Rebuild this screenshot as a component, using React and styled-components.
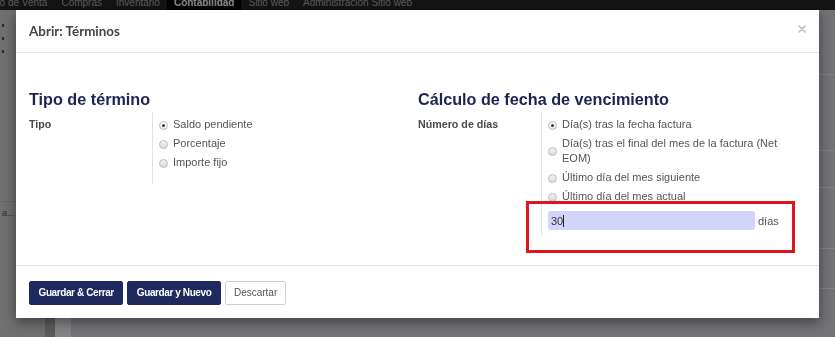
import React from 'react';
import styled, { createGlobalStyle } from 'styled-components';

const GlobalStyle = createGlobalStyle`
  html, body { margin: 0; padding: 0; width: 835px; height: 337px; overflow: hidden; background: #737377; }
  body { font-family: "Liberation Sans", Arial, sans-serif; }
  * { box-sizing: border-box; }
`;

const Page = styled.div`
  width: 835px;
  height: 337px;
  display: flex;
  flex-direction: column;
  background: #737377;
`;

const NavBar = styled.nav`
  height: 10px;
  flex: none;
  background: #141414;
  overflow: hidden;
`;

const NavList = styled.div`
  display: flex;
  margin-left: -28px;
`;

const NavItem = styled.div`
  padding: 0 7px;
  height: 10px;
  line-height: 6px;
  font-size: 10px;
  white-space: nowrap;
  color: ${p => (p.$active ? '#8c8c8c' : '#5c5c5c')};
  background: ${p => (p.$active ? '#030303' : 'transparent')};
  font-weight: ${p => (p.$active ? 700 : 400)};
`;

const Workspace = styled.div`
  flex: 1;
  display: flex;
`;

const Sidebar = styled.aside`
  width: 45px;
  background: #707070;
  padding: 14px 0 0 2px;
  display: flex;
  flex-direction: column;
  gap: 10px;
`;

const SideMark = styled.span`
  width: 2px;
  height: 3px;
  background: #2c2c2c;
`;

const SideText = styled.div`
  margin-top: 138px;
  border-top: 1px dotted #5a5a5a;
  padding-top: 6px;
  font-size: 9px;
  color: #2e2e2e;
`;

const SidebarEdge = styled.div`
  width: 10px;
  background: #5c5c5c;
`;

const Gutter = styled.div`
  width: 16px;
  background: #858586;
`;

const Content = styled.main`
  flex: 1;
  display: flex;
  flex-direction: column;
  background: #737377;
`;

const Band = styled.div`
  height: ${p => p.$h}px;
  flex: none;
  border-bottom: 1px solid #838386;
`;

/* ---------- modal ---------- */
const Backdrop = styled.div`
  position: fixed;
  inset: 0;
  padding: 10px 0 0 16px;
  display: flex;
  align-items: flex-start;
`;

const Dialog = styled.div`
  width: 803px;
  background: #fff;
  box-shadow: 0 4px 12px rgba(0, 0, 0, 0.45);
  display: flex;
  flex-direction: column;
`;

const Header = styled.div`
  height: 43px;
  border-bottom: 1px solid #e6e6e6;
  display: flex;
  align-items: center;
  justify-content: space-between;
  padding: 0 13px;
`;

const Title = styled.h4`
  margin: 0;
  font-family: Lato, "Liberation Sans", sans-serif;
  font-weight: 700;
  font-size: 13.4px;
  color: #454545;
`;

const Close = styled.button`
  border: 0;
  background: none;
  padding: 0;
  width: 8px;
  height: 8px;
  display: flex;
  margin-top: -5px;
`;

const Body = styled.div`
  padding: 36px 13px 30.5px;
  display: grid;
  grid-template-columns: 389px 1fr;
`;

const Group = styled.section`
  display: flex;
  flex-direction: column;
  align-items: stretch;
`;

const GroupTitle = styled.h2`
  margin: 0 0 3px;
  font-size: 16.2px;
  line-height: 20px;
  font-weight: 700;
  color: #1d2353;
`;

const FieldRow = styled.div`
  display: grid;
  grid-template-columns: 123px 1fr;
  align-items: start;
`;

const FieldLabel = styled.label`
  font-size: 10.7px;
  font-weight: 700;
  color: #4a4a4a;
  line-height: 15px;
  padding-top: 4.5px;
`;

const FieldValue = styled.div`
  border-left: 1px solid #e2e2e2;
  padding: 2.5px ${p => p.$pr}px ${p => p.$pb}px 6px;
`;

const RadioList = styled.div`
  display: flex;
  flex-direction: column;
`;

const RadioRow = styled.div`
  display: flex;
  align-items: center;
  gap: 5px;
  padding: 2px 0;
  line-height: 15px;
  font-size: 11px;
  color: #555;
`;

const RadioDot = styled.span`
  flex: none;
  width: 9px;
  height: 9px;
  border-radius: 50%;
  border: 1px solid #bcbcbc;
  background: ${p => (p.$checked ? 'linear-gradient(#ffffff, #e9e9e9)' : 'linear-gradient(#f3f3f3, #d9d9d9)')};
  transform: translateY(1px);
  display: flex;
  align-items: center;
  justify-content: center;
  &::after {
    content: '';
    width: 3px;
    height: 3px;
    border-radius: 50%;
    background: ${p => (p.$checked ? '#3a3a3a' : 'transparent')};
  }
`;

const InputLine = styled.div`
  position: relative;
  display: flex;
  align-items: center;
  gap: 3px;
  margin-top: 5.5px;
`;

const FakeInput = styled.div`
  width: 207px;
  height: 19px;
  background: #d3d4fa;
  border-radius: 3px;
  padding-left: 3px;
  display: flex;
  align-items: center;
  font-size: 11px;
  color: #333;
`;

const Caret = styled.span`
  width: 1px;
  height: 12px;
  background: #222;
`;

const Unit = styled.span`
  font-size: 11px;
  color: #555;
`;

const Highlight = styled.div`
  position: absolute;
  left: -22px;
  top: -10.5px;
  width: 269px;
  height: 52px;
  border: 3px solid #e0141c;
  pointer-events: none;
`;

const Footer = styled.div`
  border-top: 1px solid #e6e6e6;
  padding: 14.5px 13px 13.5px;
  display: flex;
  gap: 4px;
`;

const Button = styled.button`
  height: 24px;
  padding: 0 ${p => (p.$primary ? 8.5 : 8)}px;
  border-radius: 2px;
  border: 1px solid ${p => (p.$primary ? '#1e2a5e' : '#cfcfcf')};
  background: ${p => (p.$primary ? '#1e2a5e' : '#fff')};
  color: ${p => (p.$primary ? '#fff' : '#555')};
  font-family: "Liberation Sans", Arial, sans-serif;
  font-size: 10px;
  font-weight: ${p => (p.$primary ? 700 : 400)};
  letter-spacing: ${p => (p.$primary ? '-0.4px' : '0')};
  cursor: pointer;
`;

const navItems = ['Punto de Venta', 'Compras', 'Inventario', 'Contabilidad', 'Sitio web', 'Administración Sitio web'];
const bands = [65, 76, 37, 61, 40];

function Radio({ checked, children }) {
  return (
    <RadioRow>
      <RadioDot $checked={checked} />
      <span>{children}</span>
    </RadioRow>
  );
}

export default function App() {
  return (
    <>
      <GlobalStyle />
      <Page>
        <NavBar>
          <NavList>
            {navItems.map(n => (
              <NavItem key={n} $active={n === 'Contabilidad'}>{n}</NavItem>
            ))}
          </NavList>
        </NavBar>
        <Workspace>
          <Sidebar>
            <SideMark />
            <SideMark />
            <SideMark />
            <SideText>a...</SideText>
          </Sidebar>
          <SidebarEdge />
          <Gutter />
          <Content>
            {bands.map((h, i) => (
              <Band key={i} $h={h} />
            ))}
          </Content>
        </Workspace>
      </Page>

      <Backdrop>
        <Dialog>
          <Header>
            <Title>Abrir: Términos</Title>
            <Close aria-label="Cerrar">
              <svg width="8" height="8" viewBox="0 0 8 8">
                <path d="M1 1L7 7M7 1L1 7" stroke="#bdbdbd" strokeWidth="1.6" strokeLinecap="round" />
              </svg>
            </Close>
          </Header>
          <Body>
            <Group>
              <GroupTitle>Tipo de término</GroupTitle>
              <FieldRow>
                <FieldLabel>Tipo</FieldLabel>
                <FieldValue $pr={15} $pb={12.5}>
                  <RadioList>
                    <Radio checked>Saldo pendiente</Radio>
                    <Radio>Porcentaje</Radio>
                    <Radio>Importe fijo</Radio>
                  </RadioList>
                </FieldValue>
              </FieldRow>
            </Group>
            <Group>
              <GroupTitle>Cálculo de fecha de vencimiento</GroupTitle>
              <FieldRow>
                <FieldLabel>Número de días</FieldLabel>
                <FieldValue $pr={15} $pb={4.5}>
                  <RadioList>
                    <Radio checked>Día(s) tras la fecha factura</Radio>
                    <Radio>Día(s) tras el final del mes de la factura (Net EOM)</Radio>
                    <Radio>Último día del mes siguiente</Radio>
                    <Radio>Último día del mes actual</Radio>
                  </RadioList>
                  <InputLine>
                    <FakeInput>
                      30
                      <Caret />
                    </FakeInput>
                    <Unit>días</Unit>
                    <Highlight />
                  </InputLine>
                </FieldValue>
              </FieldRow>
            </Group>
          </Body>
          <Footer>
            <Button $primary>Guardar &amp; Cerrar</Button>
            <Button $primary>Guardar y Nuevo</Button>
            <Button>Descartar</Button>
          </Footer>
        </Dialog>
      </Backdrop>
    </>
  );
}
